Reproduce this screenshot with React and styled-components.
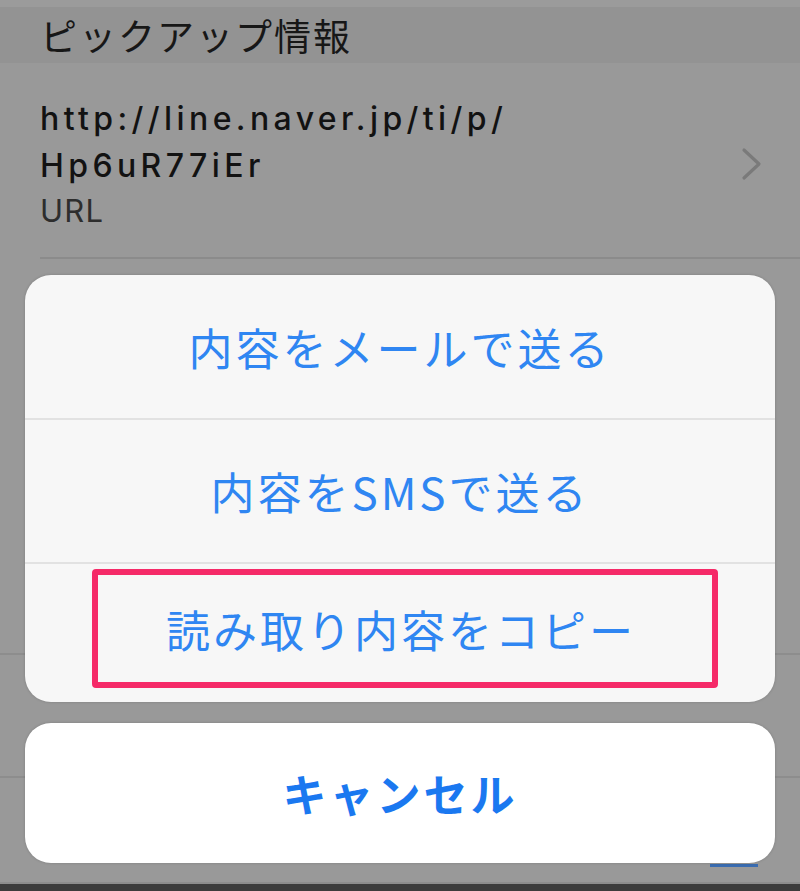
import React from 'react';
import styled, { createGlobalStyle } from 'styled-components';

const GlobalStyle = createGlobalStyle`
  html, body {
    margin: 0;
    padding: 0;
    background: #999999;
  }
  * {
    box-sizing: border-box;
  }
`;

const Screen = styled.div`
  position: relative;
  width: 800px;
  height: 891px;
  overflow: hidden;
  background: #999999;
  display: flex;
  flex-direction: column;
  font-family: Inter, "Noto Sans CJK JP", sans-serif;
`;

const TopStrip = styled.div`
  height: 7px;
  background: #9b9b9b;
`;

const SectionHeader = styled.div`
  height: 56px;
  background: #939393;
  padding-left: 40px;
  display: flex;
  align-items: center;
  font-family: "Noto Sans CJK JP", sans-serif;
  font-size: 37px;
  color: #171717;
  letter-spacing: 2px;
`;

const InfoRow = styled.div`
  height: 196px;
  margin-left: 40px;
  padding: 32px 37px 0 0;
  border-bottom: 2px solid #8b8b8b;
  display: flex;
  justify-content: space-between;
  align-items: flex-start;
`;

const InfoText = styled.div`
  display: flex;
  flex-direction: column;
`;

const UrlValue = styled.div`
  font-size: 32px;
  font-weight: 500;
  line-height: 47px;
  letter-spacing: 4.4px;
  color: #121212;
`;

const UrlLabel = styled.div`
  font-size: 31px;
  line-height: 44px;
  letter-spacing: 1.2px;
  color: #2d2d2d;
`;

const Chevron = styled.svg`
  margin-top: 52px;
  width: 22px;
  height: 34px;
`;

const EmptyRow = styled.div`
  height: ${p => p.$h}px;
  border-bottom: 2px solid #8d8d8d;
  position: relative;
`;

const BlueEdge = styled.div`
  position: absolute;
  right: 42px;
  bottom: 15px;
  width: 48px;
  height: 3px;
  background: #3a6cb0;
`;

const BottomBar = styled.div`
  flex: 1;
  background: #3c3c3c;
`;

const Sheet = styled.div`
  position: absolute;
  left: 25px;
  right: 25px;
  top: 275px;
  display: flex;
  flex-direction: column;
  gap: 21px;
`;

const Card = styled.div`
  background: ${p => (p.$white ? '#ffffff' : '#f7f7f7')};
  border-radius: 26px;
  overflow: hidden;
  box-shadow: 0 0 3px rgba(0, 0, 0, 0.18);
  display: flex;
  flex-direction: column;
`;

const ActionRow = styled.div`
  height: ${p => p.$h}px;
  display: flex;
  align-items: center;
  justify-content: center;
  border-top: ${p => (p.$first ? 'none' : '2px solid #e2e2e2')};
  font-family: "Noto Sans CJK JP", sans-serif;
  font-size: 44px;
  font-weight: ${p => (p.$bold ? 700 : 400)};
  color: ${p => (p.$bold ? '#1a78f0' : '#2f86f2')};
  letter-spacing: 3px;
`;

const HighlightRow = styled.div`
  height: 140px;
  border-top: 2px solid #e2e2e2;
  padding: 5px 0 14px 67px;
  display: flex;
`;

const Highlight = styled.div`
  width: 626px;
  height: 119px;
  padding-right: 8px;
  border: 6px solid #f52a68;
  border-radius: 4px;
  display: flex;
  align-items: center;
  justify-content: center;
  font-family: "Noto Sans CJK JP", sans-serif;
  font-size: 44px;
  color: #2f86f2;
  letter-spacing: 3px;
`;

export default function App() {
  return (
    <>
      <GlobalStyle />
      <Screen>
        <TopStrip />
        <SectionHeader>ピックアップ情報</SectionHeader>
        <InfoRow>
          <InfoText>
            <UrlValue>http://line.naver.jp/ti/p/</UrlValue>
            <UrlValue>Hp6uR77iEr</UrlValue>
            <UrlLabel>URL</UrlLabel>
          </InfoText>
          <Chevron viewBox="0 0 22 34">
            <path d="M3 3 L18 17 L3 31" fill="none" stroke="#7a7a7a" strokeWidth="3.2" strokeLinecap="round" strokeLinejoin="round" />
          </Chevron>
        </InfoRow>
        <EmptyRow $h={396} />
        <EmptyRow $h={123} />
        <EmptyRow $h={106}>
          <BlueEdge />
        </EmptyRow>
        <BottomBar />
        <Sheet>
          <Card>
            <ActionRow $first $h={143}>内容をメールで送る</ActionRow>
            <ActionRow $h={144}>内容をSMSで送る</ActionRow>
            <HighlightRow>
              <Highlight>読み取り内容をコピー</Highlight>
            </HighlightRow>
          </Card>
          <Card $white>
            <ActionRow $first $bold $h={140}>キャンセル</ActionRow>
          </Card>
        </Sheet>
      </Screen>
    </>
  );
}
